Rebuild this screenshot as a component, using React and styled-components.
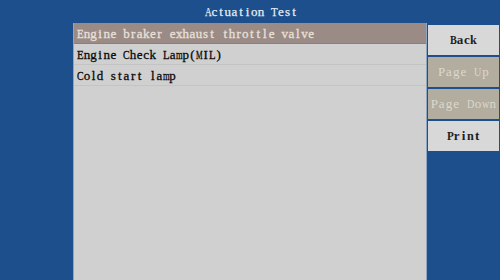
import React from "react";
import styled, { createGlobalStyle } from "styled-components";

const items = [
  "Engine braker exhaust throttle valve",
  "Engine Check Lamp(MIL)",
  "Cold start lamp",
];

const buttons = [
  { label: "Back", disabled: false },
  { label: "Page Up", disabled: true },
  { label: "Page Down", disabled: true },
  { label: "Print", disabled: false },
];

// advance widths (1/1000 em) of the serif face, for glyphs wider than half an em
const ADV = {
  A: 722, B: 667, C: 667, D: 722, E: 611, L: 611, M: 889, P: 556,
  T: 611, U: 722, m: 778, w: 722,
};
const ADV_BOLD = { ...ADV, P: 611, k: 556, n: 556, a: 500 };

const FONT = 13;

const GlobalStyle = createGlobalStyle`
  html, body {
    margin: 0;
    padding: 0;
    background: #1c4f8c;
  }
  body {
    font-family: "Liberation Serif", "DejaVu Serif", serif;
  }
`;

// the terminal font is fixed-pitch: each glyph sits in a cell of equal width
const Cell = styled.span`
  display: inline-block;
  width: ${(p) => p.w}px;
  text-align: center;
  white-space: pre;
`;

const Glyph = styled.span`
  display: inline-block;
  transform-origin: left center;
`;

const Mono = ({ text, w = 6.6, bold = false }) => {
  const table = bold ? ADV_BOLD : ADV;
  return (
    <>
      {[...text].map((ch, i) => {
        const adv = ((table[ch] || 500) / 1000) * FONT;
        const scale = adv > w ? w / adv : 1;
        return (
          <Cell key={i} w={w}>
            {scale < 1 ? (
              <Glyph style={{ transform: `scaleX(${scale.toFixed(3)})` }}>
                {ch}
              </Glyph>
            ) : (
              ch
            )}
          </Cell>
        );
      })}
    </>
  );
};

const Screen = styled.div`
  width: 500px;
  height: 280px;
  display: flex;
  flex-direction: column;
  background: #1c4f8c;
  overflow: hidden;
`;

const Title = styled.div`
  height: 23px;
  line-height: 24px;
  text-align: center;
  color: #e6edf6;
  font-size: ${FONT}px;
  -webkit-text-stroke: 0.25px #e6edf6;
  padding-left: 2px;
`;

const Body = styled.div`
  flex: 1;
  display: flex;
  padding-left: 73px;
`;

const Panel = styled.div`
  width: 352px;
  background: #d0d0d0;
  border-left: 1px solid #8ea6c2;
  border-right: 1px solid #8ea6c2;
  display: flex;
  flex-direction: column;
`;

const Row = styled.div`
  height: 20px;
  line-height: 21px;
  padding-left: 3px;
  font-size: ${FONT}px;
  white-space: nowrap;
  color: ${(p) => (p.active ? "#e8e0d8" : "#0a0a0a")};
  -webkit-text-stroke: 0.3px ${(p) => (p.active ? "#e8e0d8" : "#0a0a0a")};
  background: ${(p) => (p.active ? "#9b8b87" : "transparent")};
  border-bottom: 1px solid ${(p) => (p.active ? "#8e7f7b" : "#c4c4c4")};
`;

const Side = styled.div`
  width: 71px;
  margin-left: 1px;
  padding-top: 2px;
  display: flex;
  flex-direction: column;
  gap: 2px;
`;

const Button = styled.div`
  height: 30px;
  display: flex;
  align-items: center;
  justify-content: center;
  font-size: ${FONT}px;
  font-weight: ${(p) => (p.disabled ? "normal" : "bold")};
  color: ${(p) => (p.disabled ? "#dcd8ce" : "#1e1e1e")};
  background: ${(p) => (p.disabled ? "#b2ad9f" : "#d8d8d8")};
`;

export default function App() {
  return (
    <>
      <GlobalStyle />
      <Screen>
        <Title>
          <Mono text="Actuation Test" w={6.65} />
        </Title>
        <Body>
          <Panel>
            {items.map((text, i) => (
              <Row key={text} active={i === 0}>
                <Mono text={text} />
              </Row>
            ))}
          </Panel>
          <Side>
            {buttons.map((b) => (
              <Button key={b.label} disabled={b.disabled}>
                <Mono
                  text={b.label}
                  w={b.disabled ? 7.3 : 6.8}
                  bold={!b.disabled}
                />
              </Button>
            ))}
          </Side>
        </Body>
      </Screen>
    </>
  );
}
